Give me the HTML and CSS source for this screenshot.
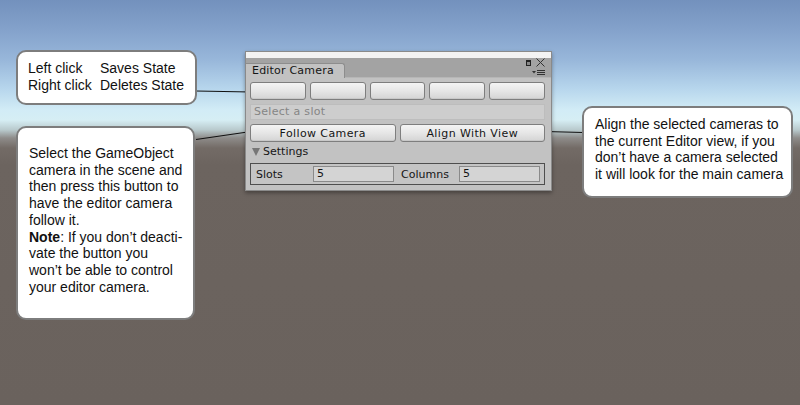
FILE: index.html
```html
<!DOCTYPE html>
<html>
<head>
<meta charset="utf-8">
<link rel="stylesheet" href="styles.css">
</head>
<body>
<div class="scene">
  <svg class="links" width="800" height="405" viewBox="0 0 800 405">
    <line x1="196" y1="91" x2="251" y2="92" />
    <line x1="196" y1="139.5" x2="251" y2="131.5" />
    <line x1="545" y1="131.5" x2="583" y2="132.5" />
  </svg>

  <div class="callout c1">
    <div class="pair"><span class="key">Left click</span><span>Saves State</span></div>
    <div class="pair"><span class="key">Right click</span><span>Deletes State</span></div>
  </div>

  <div class="callout c2">
    <p>Select the GameObject<br>camera in the scene and<br>then press this button to<br>have the editor camera<br>follow it.<br><b>Note</b>: If you don’t deacti-<br>vate the button you<br>won’t be able to control<br>your editor camera.</p>
  </div>

  <div class="callout c3">
    <p>Align the selected cameras to<br>the current Editor view, if you<br>don’t have a camera selected<br>it will look for the main camera</p>
  </div>

  <div class="win">
    <div class="topstrip"></div>
    <div class="tabbar">
      <div class="tab">Editor Camera</div>
      <div class="winctl">
        <div class="ctlrow">
          <span class="maxi"></span>
          <svg class="close" width="9" height="9" viewBox="0 0 9 9"><path d="M0.5 0.5 L8.5 8.5 M8.5 0.5 L0.5 8.5" /></svg>
        </div>
        <svg class="menu" width="13" height="7" viewBox="0 0 13 7"><path class="tri" d="M0 2 L4 2 L2 4.5 Z"/><path class="bars" d="M5 1.5 H13 M5 3.5 H13 M5 5.5 H13"/></svg>
      </div>
    </div>
    <div class="body">
      <div class="slots">
        <button class="btn"></button>
        <button class="btn"></button>
        <button class="btn"></button>
        <button class="btn"></button>
        <button class="btn"></button>
      </div>
      <div class="select">Select a slot</div>
      <div class="actions">
        <button class="btn">Follow Camera</button>
        <button class="btn">Align With View</button>
      </div>
      <div class="fold"><span class="arrow"></span>Settings</div>
      <div class="settings">
        <span class="lbl">Slots</span>
        <span class="field">5</span>
        <span class="lbl lbl2">Columns</span>
        <span class="field">5</span>
      </div>
    </div>
  </div>
</div>
</body>
</html>
```
FILE: styles.css
```css
html, body {
  margin: 0;
  padding: 0;
}
body {
  width: 800px;
  height: 405px;
  overflow: hidden;
}
.scene {
  position: relative;
  width: 800px;
  height: 405px;
  background: linear-gradient(to bottom,
    #7391bd 0px,
    #84a2cb 30px,
    #98b7da 60px,
    #b6d5ec 88px,
    #d2ecf6 110px,
    #d6eef4 120px,
    #b8c9cc 130px,
    #8e8c8a 138px,
    #736b66 148px,
    #6c645f 165px,
    #6a625d 405px);
  font-family: "Liberation Sans", Arial, sans-serif;
}
.links {
  position: absolute;
  left: 0;
  top: 0;
}
.links line {
  stroke: #111;
  stroke-width: 1.2;
}
.callout {
  position: absolute;
  box-sizing: border-box;
  background: #fff;
  border: 2px solid #7d7d7d;
  border-radius: 10px;
  color: #111;
  font-size: 14px;
  line-height: 16.7px;
}
.callout p {
  margin: 0;
}
.c1 {
  left: 16px;
  top: 50px;
  width: 181px;
  height: 55px;
  padding: 8px 0 0 10px;
  line-height: 17px;
}
.pair {
  display: flex;
}
.key {
  width: 72px;
}
.c2 {
  left: 16px;
  top: 126px;
  width: 179px;
  height: 194px;
  padding: 17px 0 0 11px;
}
.c3 {
  left: 582px;
  top: 106px;
  width: 211px;
  height: 92px;
  padding: 8px 0 0 11px;
}

/* Editor window */
.win {
  position: absolute;
  left: 245px;
  top: 51px;
  width: 307px;
  height: 140px;
  box-sizing: border-box;
  background: #c2c2c2;
  border: 1px solid #8a8a8a;
  box-shadow: 0 2px 4px rgba(0,0,0,0.35);
  font-family: "DejaVu Sans", Verdana, sans-serif;
  font-size: 11px;
  color: #151515;
  display: flex;
  flex-direction: column;
}
.topstrip {
  height: 6px;
  background: #f3f3f3;
}
.tabbar {
  height: 19px;
  background: #a3a3a3;
  display: flex;
  align-items: flex-end;
  justify-content: space-between;
  border-bottom: 1px solid #b6b6b6;
}
.tab {
  height: 15px;
  width: 99px;
  box-sizing: border-box;
  background: #c2c2c2;
  border: 1px solid #8d8d8d;
  border-bottom: none;
  border-left: none;
  border-top-right-radius: 3px;
  padding-left: 6px;
  line-height: 14px;
  margin-bottom: -1px;
  letter-spacing: 0.2px;
}
.winctl {
  display: flex;
  flex-direction: column;
  align-items: flex-end;
  padding-right: 6px;
  padding-bottom: 1px;
  gap: 2px;
}
.ctlrow {
  display: flex;
  align-items: center;
  gap: 5px;
}
.maxi {
  width: 3px;
  height: 3px;
  border: 1px solid #222;
  border-top-width: 2px;
  background: #888;
}
.close path {
  stroke: #333;
  stroke-width: 1;
  fill: none;
}
.menu .tri {
  fill: #333;
}
.menu .bars {
  stroke: #333;
  stroke-width: 1;
}
.body {
  flex: 1;
  padding: 4px 6px 0 4px;
  display: flex;
  flex-direction: column;
}
.btn {
  font: inherit;
  color: #151515;
  margin: 0;
  padding: 0;
  height: 18px;
  box-sizing: border-box;
  border: 1px solid #7e7e7e;
  border-radius: 3px;
  background: linear-gradient(to bottom, #f4f4f4 0%, #e6e6e6 50%, #d4d4d4 100%);
  box-shadow: inset 0 -1px 0 #c8c8c8;
}
.slots {
  display: flex;
  gap: 4px;
}
.slots .btn {
  flex: 1;
}
.select {
  margin-top: 4px;
  height: 16px;
  box-sizing: border-box;
  background: #cdcdcd;
  border: 1px solid #bdbdbd;
  color: #858585;
  padding-left: 3px;
  line-height: 14px;
  letter-spacing: 0.3px;
}
.actions {
  margin-top: 4px;
  display: flex;
  gap: 4px;
}
.actions .btn {
  flex: 1;
  letter-spacing: 0.4px;
}
.fold {
  height: 16px;
  margin-top: 2px;
  line-height: 16px;
  display: flex;
  align-items: center;
  padding-left: 2px;
}
.arrow {
  width: 0;
  height: 0;
  border-left: 4px solid transparent;
  border-right: 4px solid transparent;
  border-top: 8px solid #777;
  margin-right: 3px;
}
.settings {
  margin-top: 3px;
  height: 22px;
  box-sizing: border-box;
  border: 1px solid #4e4e4e;
  background: #c4c4c4;
  display: flex;
  align-items: center;
  padding: 0 4px 0 5px;
}
.lbl {
  width: 57px;
}
.lbl2 {
  width: 58px;
  margin-left: 7px;
}
.field {
  flex: 1;
  height: 16px;
  box-sizing: border-box;
  background: #d4d4d4;
  border: 1px solid #8a8a8a;
  padding-left: 3px;
  line-height: 14px;
}
```
